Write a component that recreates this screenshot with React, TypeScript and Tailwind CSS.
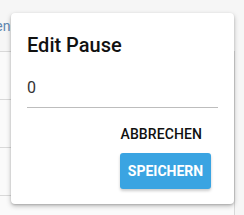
import * as React from 'react'

const font = { fontFamily: 'Roboto, "Liberation Sans", sans-serif' }

export default function App() {
  return (
    <div className="relative w-[244px] h-[215px] overflow-hidden bg-[#f6f6f6]" style={font}>
      {/* table behind the dialog */}
      <div className="w-[235px] flex flex-col">
        <div className="h-[52px] border-b border-[#d9d9d9] flex items-center">
          <span className="-ml-[36px] text-[14px] text-[#5f86b0] whitespace-nowrap mt-[2px]">Pausen</span>
        </div>
        <div className="h-[48px] border-b border-r border-[#d9d9d9] bg-[#fafafa]" />
        <div className="h-[48px] border-b border-r border-[#d9d9d9] bg-[#fafafa]" />
        <div className="h-[48px] border-b border-r border-[#d9d9d9] bg-[#fafafa]" />
        <div className="h-[48px] border-r border-[#d9d9d9] bg-[#fafafa]" />
      </div>

      {/* dialog */}
      <div className="absolute left-[11px] top-[13px] w-[223px] h-[191px] bg-white rounded-[4px] shadow-[0_2px_5px_rgba(0,0,0,0.25),0_1px_2px_rgba(0,0,0,0.15)] pt-[16px] pl-[16px] pr-[16px]">
        <h2 className="text-[20px] leading-[32px] font-medium text-[#111]">Edit Pause</h2>
        <div className="mt-[15px] h-[32px] border-b border-[#bdbdbd]">
          <div className="text-[16px] leading-[24px] text-[#333]">0</div>
        </div>
        <div className="mt-[8px] flex flex-col items-end pr-[8px]">
          <button className="h-[36px] px-[8px] text-[14px] font-medium text-[#111] tracking-[0.1px]">ABBRECHEN</button>
          <button className="mt-[1px] mr-[-1px] h-[36px] w-[91px] rounded-[3px] bg-[#3aa4e2] text-white text-[14px] font-bold shadow-[0_2px_3px_rgba(0,0,0,0.2)]">SPEICHERN</button>
        </div>
      </div>
    </div>
  )
}
